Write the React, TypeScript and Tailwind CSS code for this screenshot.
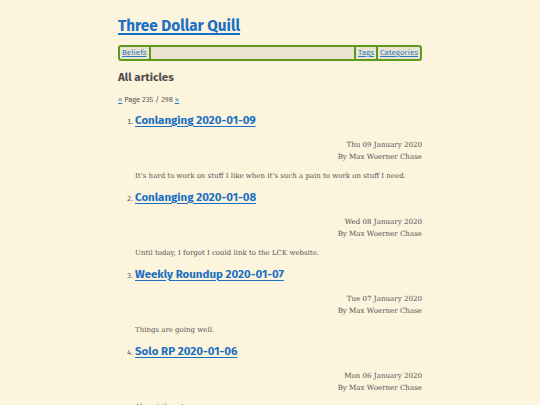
import React from "react";

const items = [
  { t: "Conlanging 2020-01-09", d: "Thu 09 January 2020", e: "It’s hard to work on stuff I like when it’s such a pain to work on stuff I need." },
  { t: "Conlanging 2020-01-08", d: "Wed 08 January 2020", e: "Until today, I forgot I could link to the LCK website." },
  { t: "Weekly Roundup 2020-01-07", d: "Tue 07 January 2020", e: "Things are going well." },
  { t: "Solo RP 2020-01-06", d: "Mon 06 January 2020", e: "Almost there!" },
];

const sans = "font-['Fira_Sans','Lato','Open_Sans',sans-serif]";
const serif = "font-['DejaVu_Serif',serif]";

export default function App() {
  return (
    <div className="min-h-[405px] h-[405px] overflow-hidden bg-[#fcf4dc] text-[#555]">
      <div className="w-[304px] mx-auto pt-[16px]">
        <h1 className={`${sans} text-[15.3px] font-bold leading-[20px] text-[#1a6fc4] underline underline-offset-2 decoration-[1.5px]`}>
          <a href="#">Three Dollar Quill</a>
        </h1>
        <nav className={`${sans} mt-[9px] flex h-[16px] items-stretch border-2 border-[#5c9a1c] rounded-[3px] bg-[#ebe4d2] text-[8px] leading-[12px]`}>
          <a className="px-[2px] text-[#2b7bc0] underline border-r-2 border-[#5c9a1c]">Beliefs</a>
          <div className="flex-1" />
          <a className="px-[2px] text-[#2b7bc0] underline border-l-2 border-[#5c9a1c]">Tags</a>
          <a className="px-[2px] text-[#2b7bc0] underline border-l-2 border-[#5c9a1c]">Categories</a>
        </nav>
        <h2 className={`${sans} mt-[8px] text-[11.5px] font-bold leading-[16px] text-[#4d4d4d]`}>All articles</h2>
        <p className={`${sans} mt-[10px] text-[7.5px] leading-[10px] text-[#555]`}>
          <a className="text-[#2b7bc0] underline">«</a> Page 235 / 298 <a className="text-[#2b7bc0] underline">»</a>
        </p>
        <ol className="mt-[7px] pl-[17px] list-decimal marker:text-[#555]">
          {items.map((it, i) => (
            <li key={i} className={`${sans} text-[7.5px] h-[77px]`}>
              <a className={`${sans} text-[11.5px] font-bold leading-[16px] text-[#1a6fc4] underline underline-offset-2`}>{it.t}</a>
              <div className={`${serif} text-[7.1px] leading-[12px] text-right mt-[11px] text-[#555]`}>
                <div>{it.d}</div>
                <div>By Max Woerner Chase</div>
              </div>
              <p className={`${serif} text-[7px] leading-[10px] mt-[8px] text-[#555]`}>{it.e}</p>
            </li>
          ))}
        </ol>
      </div>
    </div>
  );
}
